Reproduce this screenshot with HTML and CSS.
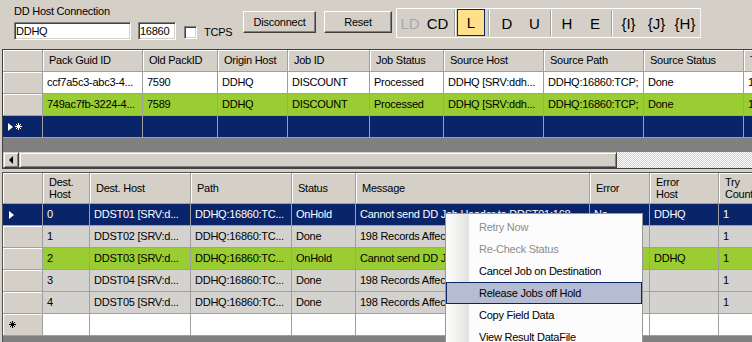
FILE: index.html
```html
<!DOCTYPE html>
<html>
<head>
<meta charset="utf-8">
<link rel="stylesheet" href="styles.css">
</head>
<body>
<div class="top">
  <div class="conn">
    <div class="conn-label">DD Host Connection</div>
    <div class="conn-row">
      <div class="tb host">DDHQ</div>
      <div class="tb port">16860</div>
      <div class="chk"></div>
      <div class="chk-label">TCPS</div>
    </div>
  </div>
  <div class="btn disc">Disconnect</div>
  <div class="btn reset">Reset</div>
  <div class="toolbar">
    <div class="ti w26 dis">LD</div>
    <div class="ti w29">CD</div>
    <div class="sep w5"></div>
    <div class="ti w28 active">L</div>
    <div class="sep w8"></div>
    <div class="ti w28">D</div>
    <div class="ti w27">U</div>
    <div class="sep w5"></div>
    <div class="ti w28">H</div>
    <div class="ti w28">E</div>
    <div class="sep w5"></div>
    <div class="ti w29">{I}</div>
    <div class="ti w27">{J}</div>
    <div class="ti w30">{H}</div>
  </div>
</div>

<div class="grid g1">
  <div class="row hdr">
    <div class="c rh"></div>
    <div class="c w100">Pack Guid ID</div>
    <div class="c w75">Old PackID</div>
    <div class="c w70">Origin Host</div>
    <div class="c w82">Job ID</div>
    <div class="c w74">Job Status</div>
    <div class="c w100">Source Host</div>
    <div class="c w100">Source Path</div>
    <div class="c w100">Source Status</div>
    <div class="c w100">Try Count</div>
  </div>
  <div class="row white">
    <div class="c rh"></div>
    <div class="c w100">ccf7a5c3-abc3-4...</div>
    <div class="c w75">7590</div>
    <div class="c w70">DDHQ</div>
    <div class="c w82">DISCOUNT</div>
    <div class="c w74">Processed</div>
    <div class="c w100">DDHQ [SRV:ddh...</div>
    <div class="c w100">DDHQ:16860:TCP;</div>
    <div class="c w100">Done</div>
    <div class="c w100">1</div>
  </div>
  <div class="row green">
    <div class="c rh"></div>
    <div class="c w100">749ac7fb-3224-4...</div>
    <div class="c w75">7589</div>
    <div class="c w70">DDHQ</div>
    <div class="c w82">DISCOUNT</div>
    <div class="c w74">Processed</div>
    <div class="c w100">DDHQ [SRV:ddh...</div>
    <div class="c w100">DDHQ:16860:TCP;</div>
    <div class="c w100">Done</div>
    <div class="c w100">1</div>
  </div>
  <div class="row sel">
    <div class="c rh"><span class="tri"></span><svg class="star" width="7" height="7" viewBox="0 0 7 7"><path d="M3.5 0V7M0 3.5H7M1 1L6 6M6 1L1 6" stroke="#fff" stroke-width="1"/></svg></div>
    <div class="c w100"></div>
    <div class="c w75"></div>
    <div class="c w70"></div>
    <div class="c w82"></div>
    <div class="c w74"></div>
    <div class="c w100"></div>
    <div class="c w100"></div>
    <div class="c w100"></div>
    <div class="c w100"></div>
  </div>
  <div class="empty g1empty"></div>
  <div class="hscroll">
    <div class="sbtn"><span class="larrow"></span></div>
    <div class="thumb"></div>
    <div class="track"></div>
  </div>
</div>

<div class="grid g2">
  <div class="row hdr tall">
    <div class="c rh"></div>
    <div class="c w47">Dest.<br>Host</div>
    <div class="c w101">Dest. Host</div>
    <div class="c w101">Path</div>
    <div class="c w64">Status</div>
    <div class="c w234">Message</div>
    <div class="c w60">Error</div>
    <div class="c w69">Error<br>Host</div>
    <div class="c w80">Try<br>Count</div>
  </div>
  <div class="row sel">
    <div class="c rh"><span class="tri"></span></div>
    <div class="c w47">0</div>
    <div class="c w101">DDST01 [SRV:d...</div>
    <div class="c w101">DDHQ:16860:TC...</div>
    <div class="c w64">OnHold</div>
    <div class="c w234">Cannot send DD Job Header to DDST01:168...</div>
    <div class="c w60">No</div>
    <div class="c w69">DDHQ</div>
    <div class="c w80">1</div>
  </div>
  <div class="row grey">
    <div class="c rh"></div>
    <div class="c w47">1</div>
    <div class="c w101">DDST02 [SRV:d...</div>
    <div class="c w101">DDHQ:16860:TC...</div>
    <div class="c w64">Done</div>
    <div class="c w234">198 Records Affected</div>
    <div class="c w60"></div>
    <div class="c w69"></div>
    <div class="c w80">1</div>
  </div>
  <div class="row green">
    <div class="c rh"></div>
    <div class="c w47">2</div>
    <div class="c w101">DDST03 [SRV:d...</div>
    <div class="c w101">DDHQ:16860:TC...</div>
    <div class="c w64">OnHold</div>
    <div class="c w234">Cannot send DD Job Header to DDST03:168...</div>
    <div class="c w60">No</div>
    <div class="c w69">DDHQ</div>
    <div class="c w80">1</div>
  </div>
  <div class="row grey">
    <div class="c rh"></div>
    <div class="c w47">3</div>
    <div class="c w101">DDST04 [SRV:d...</div>
    <div class="c w101">DDHQ:16860:TC...</div>
    <div class="c w64">Done</div>
    <div class="c w234">198 Records Affected</div>
    <div class="c w60"></div>
    <div class="c w69"></div>
    <div class="c w80">1</div>
  </div>
  <div class="row grey">
    <div class="c rh"></div>
    <div class="c w47">4</div>
    <div class="c w101">DDST05 [SRV:d...</div>
    <div class="c w101">DDHQ:16860:TC...</div>
    <div class="c w64">Done</div>
    <div class="c w234">198 Records Affected</div>
    <div class="c w60"></div>
    <div class="c w69"></div>
    <div class="c w80">1</div>
  </div>
  <div class="row white">
    <div class="c rh"><svg class="star2" width="7" height="7" viewBox="0 0 7 7"><path d="M3.5 0V7M0 3.5H7M1 1L6 6M6 1L1 6" stroke="#000" stroke-width="1"/></svg></div>
    <div class="c w47"></div>
    <div class="c w101"></div>
    <div class="c w101"></div>
    <div class="c w64"></div>
    <div class="c w234"></div>
    <div class="c w60"></div>
    <div class="c w69"></div>
    <div class="c w80"></div>
  </div>
  <div class="empty"></div>
</div>

<div class="menu">
  <div class="mi dis">Retry Now</div>
  <div class="mi dis">Re-Check Status</div>
  <div class="mi">Cancel Job on Destination</div>
  <div class="mi hot">Release Jobs off Hold</div>
  <div class="mi">Copy Field Data</div>
  <div class="mi">View Result DataFile</div>
</div>
</body>
</html>
```

FILE: styles.css
```css
* { box-sizing: border-box; margin: 0; padding: 0; }
html, body { width: 752px; height: 342px; overflow: hidden; }
body {
  background: #d4d0c8;
  font-family: "Liberation Sans", Arial, sans-serif;
  font-size: 11px;
  letter-spacing: -0.25px;
  color: #000;
  position: relative;
}

/* ---------- top panel ---------- */
.top { display: flex; align-items: flex-start; height: 48px; padding-left: 14px; }
.conn { flex: 0 0 229px; padding-top: 4px; }
.conn-label { height: 14px; line-height: 14px; }
.conn-row { display: flex; align-items: center; margin-top: 4px; height: 18px; }
.tb {
  height: 18px; background: #fff; line-height: 16px; padding-left: 1px;
  border: 1px solid; border-color: #808080 #fff #fff #808080;
  box-shadow: inset 1px 1px 0 #404040, inset -1px -1px 0 #d4d0c8;
}
.host { width: 117px; margin-right: 7px; padding-left: 1px; }
.port { width: 38px; margin-right: 8px; }
.chk {
  width: 13px; height: 13px; background: #fff; margin-right: 7px; margin-top: 2px;
  border: 1px solid; border-color: #808080 #fff #fff #808080;
  box-shadow: inset 1px 1px 0 #404040, inset -1px -1px 0 #d4d0c8;
}
.chk-label { line-height: 14px; margin-top: 2px; }

.btn {
  height: 22px; margin-top: 11px; display: flex; align-items: center; justify-content: center;
  background: #d4d0c8; border: 1px solid; border-color: #fff #404040 #404040 #fff;
  box-shadow: inset -1px -1px 0 #808080;
}
.disc { width: 73px; margin-right: 8px; }
.reset { width: 68px; }

.toolbar {
  display: flex; height: 30px; margin-left: 4px; margin-top: 8px;
  border: 1px solid #fff; border-right-color: #f4f4f4;
  font-size: 15px; letter-spacing: 0;
}
.ti { display: flex; align-items: center; justify-content: center; height: 28px; }
.ti.dis { color: #a8a8a8; }
.ti.active { background: #fee08a; border: 1px solid #0a246a; height: 27px; margin-top: 0; }
.sep { display: flex; justify-content: center; align-items: center; height: 28px; }
.sep::before { content: ""; width: 1px; height: 26px; background: #a0a0a0; border-right: 1px solid #fff; box-sizing: content-box; }
.w5 { width: 5px; } .w8 { width: 8px; }
.w26 { width: 26px; } .w27 { width: 27px; } .w28 { width: 28px; } .w29 { width: 29px; } .w30 { width: 30px; }

/* ---------- grids ---------- */
.grid {
  width: 820px; margin-left: 2px; border: 1px solid #404040; border-right: 0; overflow: hidden;
}
.g1 { margin-top: 1px; height: 120px; }
.g2 { margin-top: 3px; height: 200px; border-color: #505050; }
.row { display: flex; height: 22px; }
.c {
  flex: none; height: 100%; padding: 0 4px; line-height: 21px; white-space: nowrap; overflow: hidden;
  border-right: 1px solid #a0a0a0; border-bottom: 1px solid #a0a0a0;
}
.rh {
  width: 40px; background: #d4d0c8; box-shadow: inset 1px 1px 0 #fff; position: relative;
  display: flex; align-items: center; padding-left: 5px;
}
.hdr .c { background: #d4d0c8; box-shadow: inset 1px 1px 0 #fff; padding-left: 6px; }
.tall { height: 31px; }
.tall .c { display: flex; align-items: center; line-height: 12.5px; }
.white .c { background: #fff; }
.white .rh { background: #d4d0c8; }
.green .c { background: #9acd32; }
.green .rh { background: #d4d0c8; }
.grey .c { background: #d4d2cf; }
.grey .rh { background: #d4d0c8; }
.sel .c { background: #0a246a; color: #fff; }
.sel .rh { background: #0a246a; box-shadow: none; }
.tri {
  display: inline-block; width: 0; height: 0;
  border-left: 5px solid #fff; border-top: 4px solid transparent; border-bottom: 4px solid transparent;
  margin-right: 2px;
}
.g1 .tri { margin-left: 0; }
.g2 .tri { margin-left: 1px; }
.star { display: block; }
.star2 { display: block; margin-left: 1px; }

.w47 { width: 47px; } .w64 { width: 64px; } .w60 { width: 60px; } .w69 { width: 69px; }
.w70 { width: 70px; } .w74 { width: 74px; } .w75 { width: 75px; } .w80 { width: 80px; }
.w82 { width: 82px; } .w100 { width: 100px; } .w101 { width: 101px; } .w234 { width: 234px; }

.empty { background: #808080; height: 60px; }
.g1empty { height: 14px; }

.hscroll { display: flex; height: 16px; width: 749px; }
.sbtn {
  width: 16px; height: 16px; display: flex; align-items: center; justify-content: center;
  background: #d4d0c8; border: 1px solid; border-color: #d4d0c8 #404040 #404040 #d4d0c8;
  box-shadow: inset 1px 1px 0 #fff, inset -1px -1px 0 #808080;
}
.larrow {
  width: 0; height: 0; border-right: 4px solid #000;
  border-top: 4px solid transparent; border-bottom: 4px solid transparent; margin-left: -1px;
}
.thumb {
  width: 598px; height: 16px; background: #d4d0c8;
  border: 1px solid; border-color: #d4d0c8 #404040 #404040 #d4d0c8;
  box-shadow: inset 1px 1px 0 #fff, inset -1px -1px 0 #808080;
}
.track {
  flex: 1; height: 16px;
  background: repeating-conic-gradient(#fff 0 25%, #d4d0c8 0 50%) 0 0 / 2px 2px;
}

/* ---------- context menu ---------- */
.menu {
  position: absolute; left: 445px; top: 213px; width: 198px; height: 140px;
  border: 1px solid #979797; padding-top: 2px;
  background: linear-gradient(90deg, #fdfdfd 0, #e3e2de 23px, #fcfcfc 23px);
}
.mi { height: 22px; line-height: 20px; padding-left: 32px; border: 1px solid transparent; }
.mi.dis { color: #8d8d8d; }
.mi.hot { background: #b6bdd2; border-color: #0a246a; }
```
